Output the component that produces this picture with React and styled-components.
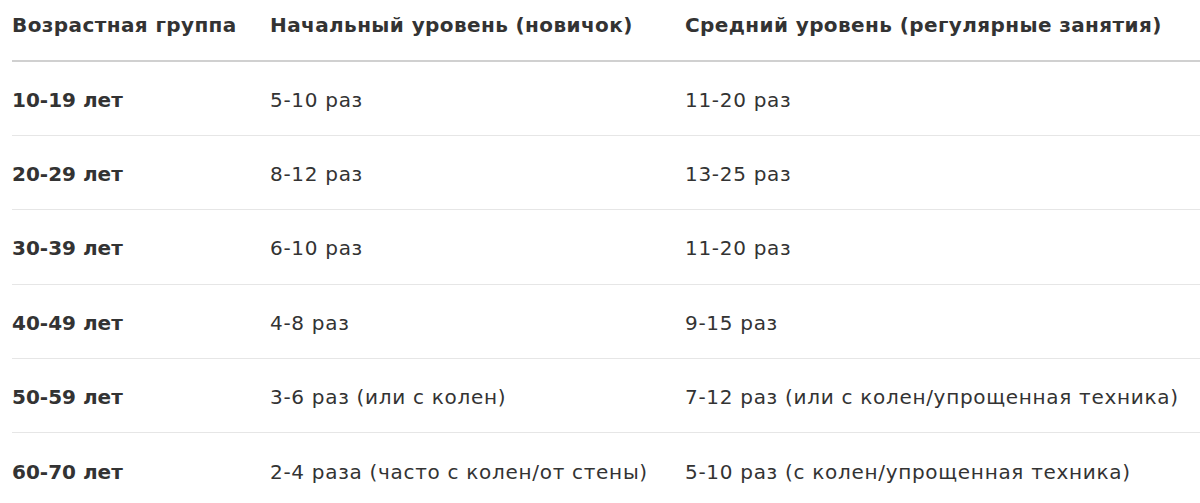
import React from "react"
import styled, { createGlobalStyle } from "styled-components"

const GlobalStyle = createGlobalStyle`
  body {
    margin: 0;
    background: #fff;
    font-family: "DejaVu Sans", sans-serif;
    color: #333;
  }
`

const rows = [
  ["10-19 лет", "5-10 раз", "11-20 раз"],
  ["20-29 лет", "8-12 раз", "13-25 раз"],
  ["30-39 лет", "6-10 раз", "11-20 раз"],
  ["40-49 лет", "4-8 раз", "9-15 раз"],
  ["50-59 лет", "3-6 раз (или с колен)", "7-12 раз (или с колен/упрощенная техника)"],
  ["60-70 лет", "2-4 раза (часто с колен/от стены)", "5-10 раз (с колен/упрощенная техника)"],
]

class App extends React.Component {
  render() {
    return (
      <Wrapper>
        <GlobalStyle />
        <Table>
          <HeadRow>
            <HeadCell>Возрастная группа</HeadCell>
            <HeadCell>Начальный уровень (новичок)</HeadCell>
            <HeadCell>Средний уровень (регулярные занятия)</HeadCell>
          </HeadRow>
          {rows.map((r, i) => (
            <Row key={i} last={i === rows.length - 1}>
              <Cell bold>{r[0]}</Cell>
              <Cell>{r[1]}</Cell>
              <Cell>{r[2]}</Cell>
            </Row>
          ))}
        </Table>
      </Wrapper>
    )
  }
}

const Wrapper = styled.div`
  padding-left: 12px;
  width: 1188px;
  overflow: hidden;
`

const Table = styled.div`
  display: flex;
  flex-direction: column;
`

const HeadRow = styled.div`
  display: grid;
  grid-template-columns: 258px 415px 1fr;
  height: 62px;
  align-items: center;
  padding-bottom: 10px;
  box-sizing: border-box;
  border-bottom: 2px solid #d0d0d0;
`

const HeadCell = styled.div`
  font-size: 20px;
  font-weight: 600;
  letter-spacing: 0.4px;
  color: #333;
  white-space: nowrap;
`

const Row = styled.div`
  display: grid;
  grid-template-columns: 258px 415px 1fr;
  align-items: center;
  height: 74.2px;
  box-sizing: border-box;
  border-bottom: ${(p) => (p.last ? "none" : "1px solid #e6e6e6")};
  padding-top: 3px;
`

const Cell = styled.div`
  font-size: 20px;
  font-weight: ${(p) => (p.bold ? 700 : 400)};
  letter-spacing: ${(p) => (p.bold ? "0" : "0.7px")};
  color: #333;
  white-space: nowrap;
`

export default App
